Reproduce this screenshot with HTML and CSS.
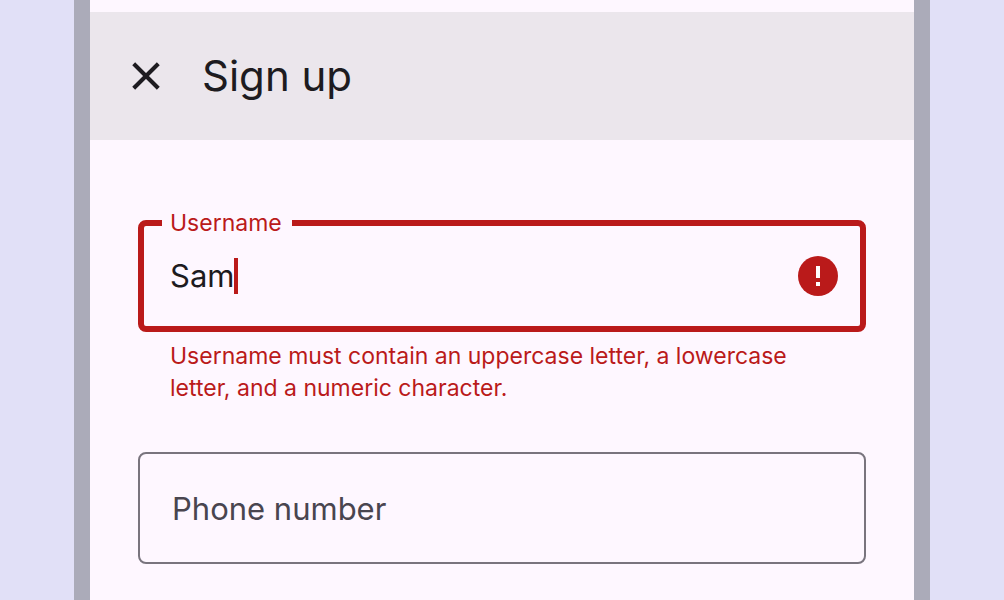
FILE: index.html
```html
<!DOCTYPE html>
<html lang="en">
<head>
<meta charset="utf-8">
<meta name="viewport" content="width=device-width, initial-scale=1">
<title>Sign up</title>
<link rel="stylesheet" href="styles.css">
</head>
<body>
<main class="device">
  <header class="app-bar">
    <button class="close" type="button" aria-label="Close">
      <svg viewBox="0 0 28 28" width="28" height="28" aria-hidden="true">
        <path d="M1.7 1.7 26.3 26.3M26.3 1.7 1.7 26.3" fill="none" stroke="currentColor" stroke-width="4.1"/>
      </svg>
    </button>
    <h1 class="title">Sign up</h1>
  </header>
  <form class="form">
    <fieldset class="field field-error">
      <legend class="legend"><label for="username">Username</label></legend>
      <div class="field-row">
        <input class="input" id="username" type="text" value="Sam" aria-invalid="true" aria-describedby="username-help">
        <span class="caret"></span>
        <svg class="error-icon" viewBox="0 0 40 40" width="40" height="40" aria-hidden="true">
          <circle cx="20" cy="20" r="20" fill="currentColor"/>
          <path d="M18 10h4v12h-4zM18 26h4v4h-4z" fill="#fff"/>
        </svg>
      </div>
    </fieldset>
    <p class="help" id="username-help">Username must contain an uppercase letter, a lowercase letter, and a numeric character.</p>
    <input class="phone" type="tel" placeholder="Phone number" aria-label="Phone number">
  </form>
</main>
</body>
</html>
```
FILE: styles.css
```css
* {
  box-sizing: border-box;
}

body {
  margin: 0;
  background: #e1e0f7;
  color: #1d1b20;
  font-family: Inter, "Liberation Sans", sans-serif;
  overflow: hidden;
}

.device {
  min-height: 100vh;
  margin: 0 74px;
  padding-top: 12px;
  border: solid #ababb9;
  border-width: 0 16px;
  background: #fef7ff;
}

.app-bar {
  display: flex;
  align-items: center;
  gap: 28px;
  height: 128px;
  padding: 0 28px;
  background: #ebe6ec;
}

.close {
  display: grid;
  place-items: center;
  width: 56px;
  height: 56px;
  padding: 0;
  border: 0;
  background: none;
  color: inherit;
}

.title {
  margin: 0;
  font-size: 42px;
  font-weight: 400;
  line-height: 56px;
}

.form {
  padding: 67px 48px 36px;
}

.field {
  min-width: 0;
  margin: 0;
  padding: 17px 22px 30px 18px;
  border: 6px solid #ba1a1a;
  border-radius: 8px;
}

.field-error,
.help {
  color: #ba1a1a;
}

.legend {
  padding: 0 10px 0 8px;
  font-size: 23px;
  line-height: 32px;
}

.field-row {
  display: flex;
  align-items: center;
  height: 40px;
  padding-left: 8px;
}

.input {
  field-sizing: content;
  padding: 0;
  border: 0;
  outline: 0;
  background: none;
  color: #1d1b20;
  font: inherit;
  font-size: 31px;
  line-height: 40px;
}

.caret {
  width: 4px;
  height: 36px;
  background: #ba1a1a;
}

.error-icon {
  margin-left: auto;
}

.help {
  margin: 8px 0 48px;
  padding: 0 32px;
  font-size: 23px;
  line-height: 32px;
}

.phone {
  display: block;
  width: 100%;
  height: 112px;
  padding: 0 32px;
  border: 2px solid #79747e;
  border-radius: 8px;
  background: none;
  color: #1d1b20;
  font: inherit;
  font-size: 31px;
}

.phone::placeholder {
  color: #49454f;
  opacity: 1;
}
```
